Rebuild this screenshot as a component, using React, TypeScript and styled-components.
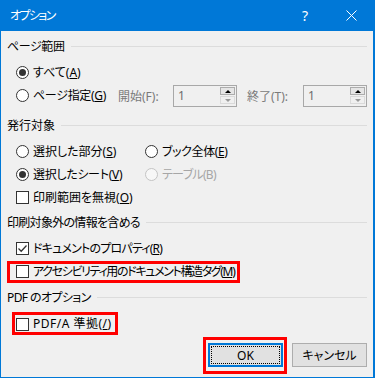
import React, {FC} from 'react'
import styled, {createGlobalStyle} from 'styled-components'

const GlobalStyle = createGlobalStyle`
  html, body {
    margin: 0;
    padding: 0;
    background: #f0f0f0;
  }
  body {
    font-family: "Noto Sans", "Noto Sans CJK JP", sans-serif;
    font-feature-settings: "palt";
    font-size: 12px;
    color: #000;
  }
`

const Window = styled.div`
  width: 375px;
  height: 378px;
  display: flex;
  flex-direction: column;
  box-sizing: border-box;
  background: #f0f0f0;
`

const TitleBar = styled.div`
  height: 31px;
  flex: none;
  display: flex;
  align-items: center;
  padding: 0 1px 0 10px;
  background: #0078d7;
  color: #fff;
`

const TitleText = styled.span`
  flex: 1;
  font-size: 12px;
  line-height: 16px;
  letter-spacing: -1.6px;
`

const CaptionButton = styled.span<{$width: number; $gap?: number}>`
  width: ${({$width}) => $width}px;
  margin-left: ${({$gap}) => $gap || 0}px;
  height: 31px;
  display: flex;
  align-items: center;
  justify-content: center;
  font-size: 14px;
`

const Body = styled.div`
  flex: 1;
  display: flex;
  flex-direction: column;
  padding: 8px 6px 0 6px;
  border: solid #0078d7;
  border-width: 0 2px 1px 1px;
`

const Group = styled.section<{$top: number}>`
  margin-top: ${({$top}) => $top}px;
`

const GroupHeader = styled.div`
  display: flex;
  align-items: center;
  gap: 6px;
  height: 16px;
  line-height: 16px;
  white-space: nowrap;
`

const HeaderLabel = styled.span<{$tracking?: number}>`
  letter-spacing: ${({$tracking}) => $tracking || 0}px;
`

const Rule = styled.div`
  flex: 1;
  height: 1px;
  margin-top: -2px;
  background: #dcdcdc;
`

const Rows = styled.div`
  display: flex;
  flex-direction: column;
  margin-top: 6px;
  padding-left: 9px;
`

const Row = styled.div`
  height: 23px;
  display: flex;
  align-items: center;
`

const Option = styled.label<{$width?: number; $disabled?: boolean}>`
  display: flex;
  align-items: center;
  gap: 4px;
  flex: none;
  width: ${({$width}) => ($width ? `${$width}px` : 'auto')};
  line-height: 16px;
  white-space: nowrap;
  color: ${({$disabled}) => ($disabled ? '#a6a6a6' : '#000')};
`

const OptionText = styled.span<{$tracking?: number}>`
  letter-spacing: ${({$tracking}) => $tracking || 0}px;
`

const Caption = styled.span<{$width: number; $indent?: number}>`
  width: ${({$width}) => $width}px;
  margin-left: ${({$indent}) => $indent || 0}px;
  flex: none;
  color: #7a7a7a;
  white-space: nowrap;
`

const RadioMark = styled.span<{$checked?: boolean; $disabled?: boolean}>`
  width: 13px;
  height: 13px;
  flex: none;
  box-sizing: border-box;
  border-radius: 50%;
  border: 1px solid ${({$disabled}) => ($disabled ? '#c4c4c4' : '#333')};
  background: ${({$disabled}) => ($disabled ? '#f7f7f7' : '#fff')};
  display: flex;
  align-items: center;
  justify-content: center;

  &::after {
    content: '';
    width: 7px;
    height: 7px;
    border-radius: 50%;
    background: #333;
    display: ${({$checked}) => ($checked ? 'block' : 'none')};
  }
`

const CheckMark = styled.span`
  width: 13px;
  height: 13px;
  flex: none;
  box-sizing: border-box;
  border: 1px solid #333;
  background: #fff;
  display: flex;
  align-items: center;
  justify-content: center;
`

const Marked = styled.div<{$pad: string; $margin: string}>`
  display: inline-flex;
  align-items: center;
  border: 3px solid #ff0000;
  padding: ${({$pad}) => $pad};
  margin: ${({$margin}) => $margin};
`

const SpinBox = styled.div`
  width: 64px;
  height: 22px;
  flex: none;
  box-sizing: border-box;
  display: flex;
  align-items: center;
  padding: 1px 1px 1px 4px;
  border: 1px solid #a8a8a8;
  background: #f0f0f0;
  color: #6d6d6d;
`

const SpinValue = styled.span`
  flex: 1;
`

const SpinButtons = styled.div`
  display: flex;
  flex-direction: column;
  width: 15px;
  gap: 1px;
`

const SpinButton = styled.div<{$down?: boolean}>`
  height: 8px;
  box-sizing: border-box;
  display: flex;
  align-items: center;
  justify-content: center;
  border: 1px solid ${({$down}) => ($down ? '#dadada' : '#acacac')};
  background: ${({$down}) => ($down ? '#f0f0f0' : '#e5e5e5')};

  &::after {
    content: '';
    border-left: 3px solid transparent;
    border-right: 3px solid transparent;
    ${({$down}) => ($down ? 'border-top: 3px solid #9a9a9a;' : 'border-bottom: 3px solid #000;')}
  }
`

const ButtonBar = styled.div`
  display: flex;
  justify-content: flex-end;
  align-items: center;
  gap: 9px;
  margin-top: 8px;
`

const Button = styled.button<{$default?: boolean}>`
  position: relative;
  width: 75px;
  height: 24px;
  box-sizing: border-box;
  padding: 0;
  font: inherit;
  color: #000;
  background: #e1e1e1;
  border: ${({$default}) => ($default ? '2px solid #0078d7' : '1px solid #adadad')};

  ${({$default}) => $default && `
    &::after {
      content: '';
      position: absolute;
      inset: 1px;
      border: 1px dotted #000;
    }
  `}
`

type ChoiceProps = {
    checked?: boolean
    disabled?: boolean
    width?: number
    tracking?: number
    children: React.ReactNode
}

const Radio: FC<ChoiceProps> = ({checked, disabled, children, width, tracking}) => (
    <Option $width={width} $disabled={disabled}>
        <RadioMark $checked={checked} $disabled={disabled}/>
        <OptionText $tracking={tracking}>{children}</OptionText>
    </Option>
)

const Check: FC<ChoiceProps> = ({checked, children, tracking}) => (
    <Option>
        <CheckMark>
            {checked && (
                <svg width="11" height="11" viewBox="0 0 11 11">
                    <polyline points="1.5,5.5 4.2,8.2 9.5,2.5" fill="none" stroke="#333" strokeWidth="1.3"/>
                </svg>
            )}
        </CheckMark>
        <OptionText $tracking={tracking}>{children}</OptionText>
    </Option>
)

const Spin: FC<{value: string}> = ({value}) => (
    <SpinBox>
        <SpinValue>{value}</SpinValue>
        <SpinButtons>
            <SpinButton/>
            <SpinButton $down/>
        </SpinButtons>
    </SpinBox>
)

const App: FC = () => {
    return (
        <>
            <GlobalStyle/>
            <Window>
                <TitleBar>
                    <TitleText>オプション</TitleText>
                    <CaptionButton $width={30}>?</CaptionButton>
                    <CaptionButton $width={46} $gap={8}>
                        <svg width="11" height="11" viewBox="0 0 11 11">
                            <path d="M0.5 0.5 L10.5 10.5 M10.5 0.5 L0.5 10.5" stroke="#fff" strokeWidth="1"/>
                        </svg>
                    </CaptionButton>
                </TitleBar>

                <Body>
                    <Group $top={0}>
                        <GroupHeader><HeaderLabel $tracking={-0.4}>ページ範囲</HeaderLabel><Rule/></GroupHeader>
                        <Rows>
                            <Row>
                                <Radio checked>すべて(<u>A</u>)</Radio>
                            </Row>
                            <Row>
                                <Radio width={102} tracking={-0.3}>ページ指定(<u>G</u>)</Radio>
                                <Caption $width={55}>開始(F):</Caption>
                                <Spin value="1"/>
                                <Caption $width={56} $indent={10}>終了(T):</Caption>
                                <Spin value="1"/>
                            </Row>
                        </Rows>
                    </Group>

                    <Group $top={11}>
                        <GroupHeader><HeaderLabel>発行対象</HeaderLabel><Rule/></GroupHeader>
                        <Rows>
                            <Row>
                                <Radio width={129}>選択した部分(<u>S</u>)</Radio>
                                <Radio tracking={-0.4}>ブック全体(<u>E</u>)</Radio>
                            </Row>
                            <Row>
                                <Radio width={129} checked tracking={-0.3}>選択したシート(<u>V</u>)</Radio>
                                <Radio disabled tracking={-0.7}>テーブル(B)</Radio>
                            </Row>
                            <Row>
                                <Check>印刷範囲を無視(<u>O</u>)</Check>
                            </Row>
                        </Rows>
                    </Group>

                    <Group $top={6}>
                        <GroupHeader><HeaderLabel $tracking={-0.7}>印刷対象外の情報を含める</HeaderLabel><Rule/></GroupHeader>
                        <Rows>
                            <Row>
                                <Check checked tracking={-0.8}>ドキュメントのプロパティ(<u>R</u>)</Check>
                            </Row>
                            <Row>
                                <Marked $pad="0 3px 0 6px" $margin="0 0 0 -9px">
                                    <Check tracking={-1.35}>アクセシビリティ用のドキュメント構造タグ(<u>M</u>)</Check>
                                </Marked>
                            </Row>
                        </Rows>
                    </Group>

                    <Group $top={7}>
                        <GroupHeader><HeaderLabel $tracking={-0.6}>PDF のオプション</HeaderLabel><Rule/></GroupHeader>
                        <Rows>
                            <Row>
                                <Marked $pad="1px 3px 0 1px" $margin="0 0 0 -4px">
                                    <Check tracking={0.5}>PDF/A 準拠(<u>/</u>)</Check>
                                </Marked>
                            </Row>
                        </Rows>
                    </Group>

                    <ButtonBar>
                        <Marked $pad="3px 1px 4px 2px" $margin="-6px -4px -7px -5px">
                            <Button $default>OK</Button>
                        </Marked>
                        <Button>キャンセル</Button>
                    </ButtonBar>
                </Body>
            </Window>
        </>
    )
}

export default App
